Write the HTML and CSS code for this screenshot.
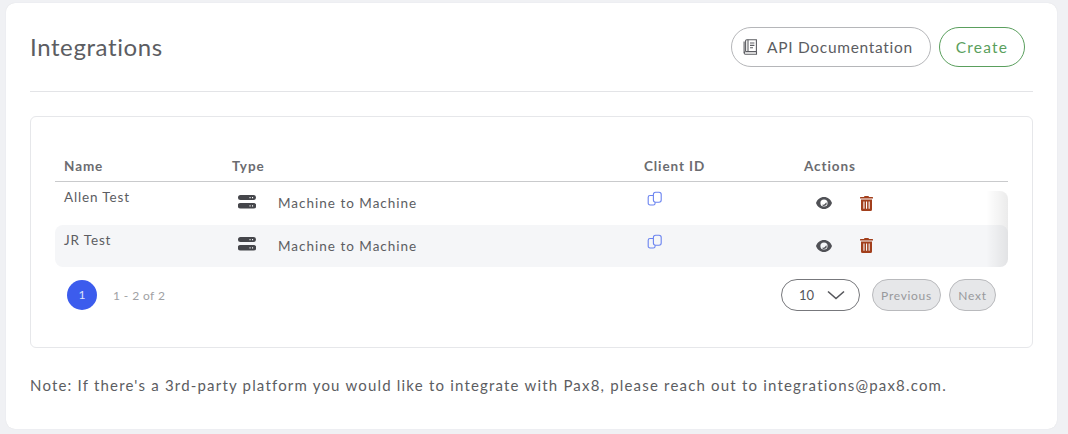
FILE: index.html
```html
<!DOCTYPE html>
<html lang="en">

<head>
  <meta charset="utf-8" />
  <title>Integrations</title>
  <link rel="stylesheet" href="styles.css">
</head>

<body>
  <main class="card">
    <header class="card-header">
      <h1 class="title">Integrations</h1>
      <div class="header-actions">
        <button class="btn btn-docs">
          <svg class="book-icon" width="15" height="16" viewBox="0 0 15 16" fill="none" stroke="#5c5d62" stroke-width="1.1">
            <path d="M2.6 12.6V1.9a1.2 1.2 0 0 1 1.2-1.2h9.6v11.9H2.9" />
            <path d="M5 .8v11.7" />
            <path d="M1.1 2.4v11.4a1.4 1.4 0 0 0 1.4 1.4h11v-2.6" />
            <path d="M2.6 12.6a1.3 1.3 0 0 0-1.3 1.3" />
            <path d="M7 4h4.4M7 6.4h4.4M7 8.8h3" />
          </svg>
          API Documentation
        </button>
        <button class="btn btn-create">Create</button>
      </div>
    </header>

    <section class="panel">
      <div class="table-head">
        <div>Name</div>
        <div>Type</div>
        <div>Client ID</div>
        <div>Actions</div>
      </div>
      <div class="table-body">
        <div class="table-row">
          <div class="cell-name">Allen Test</div>
          <div class="cell-type">
            <svg class="server-icon" width="18" height="16" viewBox="0 0 18 16"><use href="#server" /></svg>
            Machine to Machine
          </div>
          <div class="cell-id">
            <svg width="16" height="16" viewBox="0 0 16 16"><use href="#copy" /></svg>
          </div>
          <div class="cell-actions">
            <svg width="16" height="12" viewBox="0 0 16 12"><use href="#eye" /></svg>
            <svg width="13" height="15" viewBox="0 0 13 15"><use href="#trash" /></svg>
          </div>
        </div>
        <div class="table-row table-row-alt">
          <div class="cell-name">JR Test</div>
          <div class="cell-type">
            <svg class="server-icon" width="18" height="16" viewBox="0 0 18 16"><use href="#server" /></svg>
            Machine to Machine
          </div>
          <div class="cell-id">
            <svg width="16" height="16" viewBox="0 0 16 16"><use href="#copy" /></svg>
          </div>
          <div class="cell-actions">
            <svg width="16" height="12" viewBox="0 0 16 12"><use href="#eye" /></svg>
            <svg width="13" height="15" viewBox="0 0 13 15"><use href="#trash" /></svg>
          </div>
        </div>
        <div class="scroll-shade"></div>
      </div>
      <div class="pagination">
        <span class="page-current">1</span>
        <span class="page-count">1 - 2 of 2</span>
        <div class="page-size">
          10
          <svg width="20" height="10" viewBox="0 0 20 10" fill="none" stroke="#55565b" stroke-width="1.6">
            <path d="M2 1.5l8 7 8-7" />
          </svg>
        </div>
        <button class="btn-page btn-prev" disabled>Previous</button>
        <button class="btn-page btn-next" disabled>Next</button>
      </div>
    </section>

    <p class="note">Note: If there's a 3rd-party platform you would like to integrate with Pax8, please reach out to integrations@pax8.com.</p>
  </main>

  <svg class="icon-defs" width="0" height="0">
    <defs>
      <g id="server">
        <path fill="#45464b" fill-rule="evenodd" d="M2.5 1h13A2.5 2.5 0 0 1 18 3.5A2.5 2.5 0 0 1 15.500 6h-13A2.5 2.5 0 0 1 0 3.5A2.5 2.5 0 0 1 2.5 1ZM11.5 3v1.2h1.1V3ZM14 3v1.2h1.1V3Z" />
        <path fill="#45464b" fill-rule="evenodd" d="M2.5 9h13a2.7 2.7 0 0 1 0 5.5h-13a2.7 2.7 0 0 1 0-5.5ZM11.5 11.2v1.2h1.1v-1.2ZM14 11.2v1.2h1.1v-1.2Z" />
      </g>
      <g id="copy" fill="none" stroke="#6b84f0" stroke-width="1.1">
        <path d="M6 4.5H3a1.8 1.8 0 0 0-1.8 1.8v5.900A1.8 1.8 0 0 0 3 14h3.3a1.8 1.8 0 0 0 1.8-1.8v-1" />
        <rect x="6.4" y="1.2" width="7.8" height="10" rx="2.2" />
      </g>
      <g id="eye">
        <path fill="#505156" fill-rule="evenodd" d="M8 0c3.8 0 6.7 2.5 8 6-1.3 3.5-4.2 6-8 6S1.3 9.5 0 6c1.3-3.5 4.2-6 8-6Zm0 2.4a3.6 3.6 0 1 0 0 7.2 3.6 3.6 0 0 0 0-7.2Z" />
        <path fill="#505156" d="M10.2 5.200A2.4 2.4 0 0 1 6 7.800c1.8.2 3.4-.9 4.2-2.6Z" />
      </g>
      <g id="trash" fill="#a23f1c">
        <path d="M4.5 0h4l.5 1h3.5a.5.5 0 0 1 .5.5V2.6H0V1.5A.5.5 0 0 1 .5 1H4Z" />
        <path fill-rule="evenodd" d="M1 3.5h11v10A1.5 1.5 0 0 1 10.500 15h-8A1.5 1.5 0 0 1 1 13.500ZM3.4 5.500v7.300h1.100V5.500ZM6 5.500v7.300h1.100V5.500ZM8.600 5.500v7.300h1.100V5.500Z" />
      </g>
    </defs>
  </svg>
</body>

</html>
```

FILE: styles.css
```css
html,
body {
  height: 100%;
  margin: 0;
}

body {
  background-color: #f0f1f4;
  font-family: "Lato", "Noto Sans", sans-serif;
  color: #5c5d62;
  overflow: hidden;
}

.icon-defs {
  display: block;
}

.card {
  box-sizing: border-box;
  width: 1051px;
  height: 426px;
  margin: 3px 0 0 6px;
  padding: 24px 24px 0;
  background-color: #fff;
  border-radius: 9px;
  box-shadow: 0 0 1px #d5d6da;
}

.card-header {
  display: flex;
  align-items: center;
  justify-content: space-between;
  height: 64px;
  padding-right: 8px;
  border-bottom: 1px solid #e3e4e7;
}

.title {
  margin: 0 0 24px;
  font-size: 24px;
  font-weight: 400;
  letter-spacing: 0.6px;
  line-height: 40px;
}

.header-actions {
  display: flex;
  gap: 8px;
  margin-bottom: 24px;
}

.btn {
  display: flex;
  align-items: center;
  justify-content: center;
  box-sizing: border-box;
  height: 40px;
  padding: 0;
  background: #fff;
  border-radius: 20px;
  font-family: inherit;
  font-size: 15.5px;
  letter-spacing: 0.7px;
}

.btn-docs {
  gap: 9px;
  justify-content: flex-start;
  width: 200px;
  padding-left: 11px;
  border: 1px solid #b5b6b9;
  color: #5c5d62;
}

.btn-create {
  width: 86px;
  border: 1px solid #5a9f5d;
  color: #5a9f5d;
  letter-spacing: 1.2px;
}

.panel {
  box-sizing: border-box;
  height: 232px;
  margin-top: 24px;
  padding: 39px 24px 0;
  border: 1px solid #e6e7ea;
  border-radius: 6px;
}

.table-head,
.table-row {
  display: grid;
  grid-template-columns: 168px 412px 160px 1fr;
  padding-left: 9px;
}

.table-head {
  height: 25px;
  border-bottom: 1px solid #c9cacc;
  font-size: 13.5px;
  font-weight: 700;
  letter-spacing: 0.9px;
  line-height: 21px;
  color: #6b6c70;
}

.table-body {
  position: relative;
}

.table-row {
  height: 42.5px;
  font-size: 13.5px;
  letter-spacing: 1px;
  border-radius: 8px;
}

.table-row-alt {
  background-color: #f5f6f8;
}

.cell-name {
  padding-top: 5px;
  line-height: 20px;
  letter-spacing: 0.85px;
}

.cell-type {
  display: flex;
  align-items: center;
  gap: 22px;
  margin-left: 6px;
}

.server-icon {
  flex: none;
  margin-bottom: 3px;
}

.cell-id {
  padding-top: 9px;
  margin-left: 3px;
}

.cell-actions {
  display: flex;
  align-items: center;
  gap: 28px;
  margin-left: 12px;
}

.scroll-shade {
  position: absolute;
  top: 9px;
  right: 0;
  bottom: 0;
  width: 22px;
  border-radius: 0 8px 8px 0;
  background-image: linear-gradient(to right, rgba(0, 0, 0, 0), rgba(0, 0, 0, 0.08));
}

.pagination {
  display: flex;
  align-items: center;
  margin-top: 12px;
  padding: 0 12px;
}

.page-current {
  width: 30px;
  height: 30px;
  border-radius: 50%;
  background-color: #3c5ced;
  color: #dfe4fb;
  font-size: 12px;
  line-height: 30px;
  text-align: center;
}

.page-count {
  margin-left: 16px;
  font-size: 12px;
  letter-spacing: 0.4px;
  color: #a0a1a4;
}

.page-size {
  display: flex;
  align-items: center;
  justify-content: space-between;
  box-sizing: border-box;
  width: 79px;
  height: 32px;
  margin-left: auto;
  padding: 0 13px 0 17px;
  border: 1px solid #77787c;
  border-radius: 16px;
  font-size: 13px;
  color: #55565b;
}

.btn-page {
  box-sizing: border-box;
  height: 32px;
  padding: 0;
  background-color: #e6e7e9;
  border: 1px solid #b9babd;
  border-radius: 16px;
  font-family: inherit;
  font-size: 12px;
  letter-spacing: 0.7px;
  color: #98999c;
}

.btn-prev {
  width: 69px;
  margin-left: 12px;
}

.btn-next {
  width: 47px;
  margin-left: 8px;
}

.note {
  margin: 26px 0 0;
  font-size: 15px;
  letter-spacing: 1.19px;
  line-height: 22px;
}
```
